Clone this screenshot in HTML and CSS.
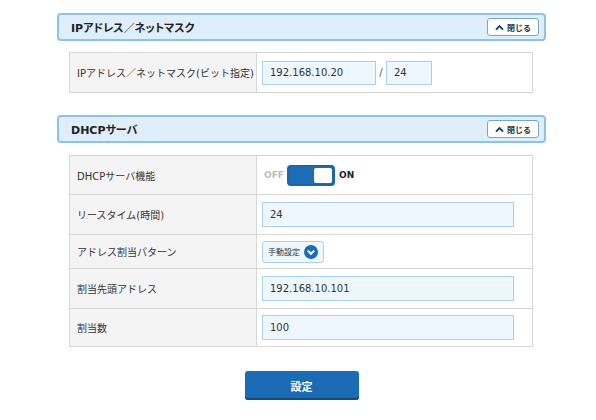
FILE: index.html
```html
<!DOCTYPE html>
<html lang="ja">
<head>
    <meta charset="UTF-8">
    <meta name="viewport" content="width=device-width, initial-scale=1.0">
    <title>DHCP設定</title>
    <link rel="stylesheet" href="styles.css">
</head>
<body>
<div class="page">
    <div class="sec-head">
        <span class="sec-title">IPアドレス／ネットマスク</span>
        <button class="close-btn" type="button">
            <svg class="up" viewBox="0 0 10 8" width="9" height="7"><path d="M1 6.5 L5 2.5 L9 6.5" fill="none" stroke="#1b3f6e" stroke-width="2.2"/></svg>閉じる
        </button>
    </div>
    <table class="grid">
        <tr class="tall">
            <th>IPアドレス／ネットマスク(ビット指定)</th>
            <td>
                <div class="ipmask">
                    <input class="field ip" value="192.168.10.20">
                    <span class="slash">/</span>
                    <input class="field mask" value="24">
                </div>
            </td>
        </tr>
    </table>

    <div class="sec-head sec2">
        <span class="sec-title">DHCPサーバ</span>
        <button class="close-btn" type="button">
            <svg class="up" viewBox="0 0 10 8" width="9" height="7"><path d="M1 6.5 L5 2.5 L9 6.5" fill="none" stroke="#1b3f6e" stroke-width="2.2"/></svg>閉じる
        </button>
    </div>
    <table class="grid">
        <tr class="row39">
            <th>DHCPサーバ機能</th>
            <td>
                <div class="switch-wrap">
                    <span class="off">OFF</span>
                    <span class="switch"><span class="knob"></span></span>
                    <span class="on">ON</span>
                </div>
            </td>
        </tr>
        <tr class="row40">
            <th>リースタイム(時間)</th>
            <td><input class="field wide" value="24"></td>
        </tr>
        <tr class="row34">
            <th>アドレス割当パターン</th>
            <td>
                <span class="select">手動設定
                    <svg viewBox="0 0 14 14" width="14" height="14"><circle cx="7" cy="7" r="7" fill="#1c6db6"/><path d="M3.8 5.6 L7 8.8 L10.2 5.6" fill="none" stroke="#fff" stroke-width="2"/></svg>
                </span>
            </td>
        </tr>
        <tr class="row40">
            <th>割当先頭アドレス</th>
            <td><input class="field wide" value="192.168.10.101"></td>
        </tr>
        <tr class="row38">
            <th>割当数</th>
            <td><input class="field wide" value="100"></td>
        </tr>
    </table>

    <div class="actions">
        <button class="submit" type="button">設定</button>
    </div>
</div>
</body>
</html>
```

FILE: styles.css
```css
* {
    margin: 0;
    padding: 0;
    box-sizing: border-box;
}

body {
    background: #fff;
    font-family: "DejaVu Sans", "Noto Sans CJK JP", sans-serif;
    font-size: 10px;
    color: #333;
}

.page {
    width: 489px;
    margin: 13px 0 0 57px;
}

.sec-head {
    height: 28px;
    display: flex;
    align-items: center;
    justify-content: space-between;
    padding: 0 5px 0 12px;
    background: #dfeefb;
    border: 2px solid #8ec2ea;
    border-radius: 4px;
}

.sec2 {
    margin-top: 22px;
}

.sec-title {
    font-weight: bold;
    font-size: 11px;
    color: #222;
    font-feature-settings: "palt";
}

.close-btn {
    width: 52px;
    height: 18px;
    display: flex;
    align-items: center;
    justify-content: center;
    gap: 3px;
    background: #fff;
    border: 1px solid #7ba6c9;
    border-radius: 3px;
    font-family: "Noto Sans CJK JP", sans-serif;
    font-size: 8px;
    font-weight: bold;
    color: #333;
}

.grid {
    width: 464px;
    margin: 11px 0 0 12px;
    border-collapse: collapse;
}

.sec2 + .grid {
    margin-top: 12px;
}

.grid th,
.grid td {
    border: 1px solid #d6d6d6;
    text-align: left;
    vertical-align: middle;
}

.grid th {
    width: 187px;
    padding-left: 7px;
    background: #f4f4f4;
    font-weight: normal;
    color: #333;
}

.grid td {
    padding-left: 5px;
}

.tall { height: 40px; }
.row40 { height: 40px; }
.row39 { height: 39px; }
.row38 { height: 38px; }
.row34 { height: 34px; }

.field {
    height: 25px;
    padding: 0 7px;
    background: #eef7fe;
    border: 1px solid #a9d0ec;
    font-family: "DejaVu Sans", sans-serif;
    font-size: 10px;
    color: #333;
}

.ipmask {
    display: flex;
    align-items: center;
}

.ip { width: 114px; height: 24px; }
.mask { width: 46px; height: 24px; }

.slash {
    width: 10px;
    text-align: center;
    color: #555;
}

.wide { width: 252px; }

.switch-wrap {
    display: flex;
    align-items: center;
    padding-left: 2px;
}

.off {
    font-weight: bold;
    font-size: 9px;
    color: #bbb;
    width: 23px;
}

.switch {
    display: flex;
    justify-content: flex-end;
    width: 48px;
    height: 21px;
    padding: 1px;
    background: #1d6db5;
    border: 2px solid #1c63a8;
    border-radius: 4px;
}

.knob {
    width: 18px;
    background: #fff;
    border-radius: 2px;
}

.on {
    margin-left: 4px;
    font-weight: bold;
    font-size: 9px;
    color: #222;
}

.select {
    display: inline-flex;
    align-items: center;
    gap: 4px;
    height: 22px;
    width: 62px;
    padding-left: 5px;
    background: #eef7fe;
    border: 1px solid #a9d0ec;
    border-radius: 3px;
    font-family: "Noto Sans CJK JP", sans-serif;
    font-size: 8px;
    color: #333;
}

.actions {
    display: flex;
    justify-content: center;
    margin-top: 24px;
}

.submit {
    width: 114px;
    height: 29px;
    background: #1c6cb5;
    border: none;
    border-radius: 3px;
    box-shadow: inset 0 -2px 0 #134c82;
    font-family: "Noto Sans CJK JP", sans-serif;
    font-size: 11px;
    font-weight: bold;
    color: #fff;
}
```
